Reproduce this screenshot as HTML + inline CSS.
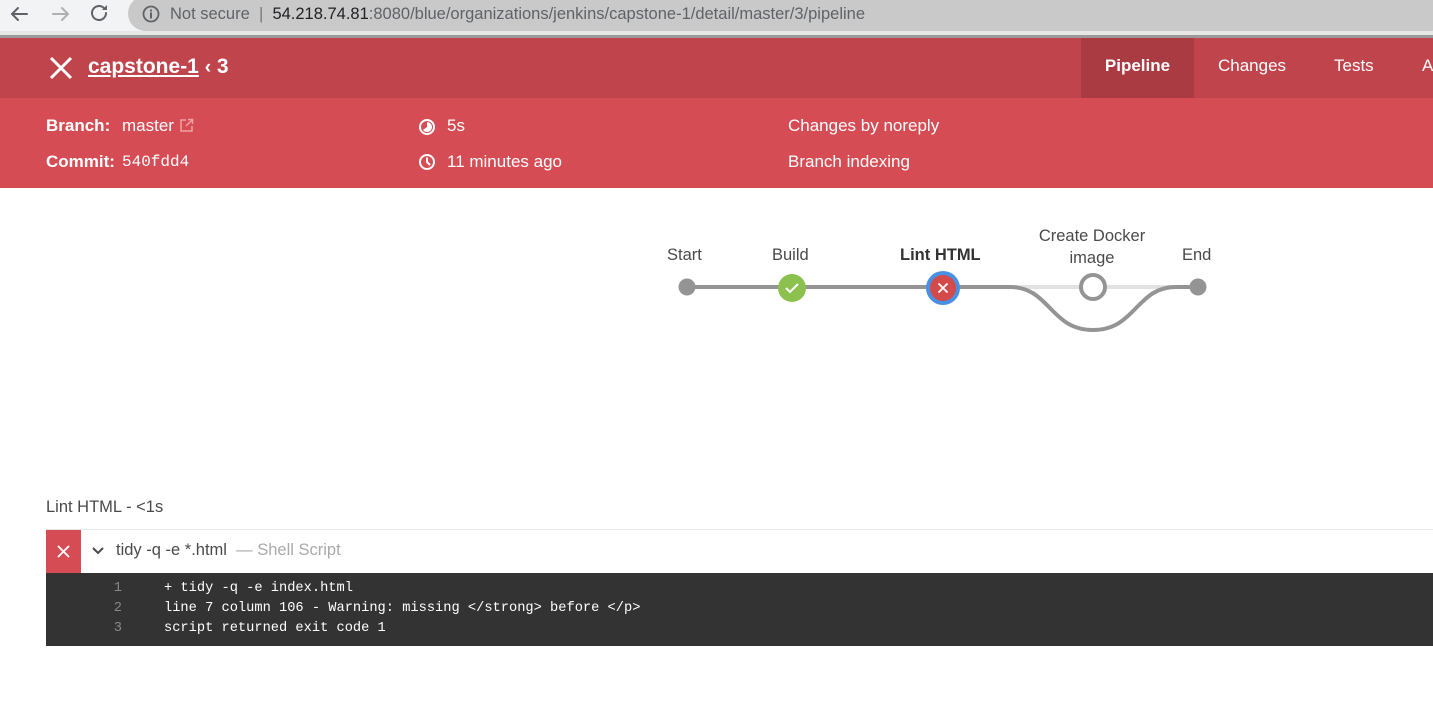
<!DOCTYPE html>
<html><head><meta charset="utf-8"><style>
*{margin:0;padding:0;box-sizing:border-box}
body{width:1433px;height:719px;overflow:hidden;background:#fff;font-family:"Liberation Sans",sans-serif;position:relative}
.abs{position:absolute}
.chrome{left:0;top:0;width:1433px;height:31px;background:#f1f3f4}
.pill{left:128px;top:-4px;width:1320px;height:35px;border-radius:18px;background:#c9c9c9}
.url{left:170px;top:5px;font-size:16.5px;color:#5f6368;white-space:nowrap}
.url b{font-weight:normal;color:#202124}
.hdr{left:0;top:38px;width:1433px;height:60px;background:#c0444c;color:#fff}
.sub{left:0;top:98px;width:1433px;height:90px;background:#d64c54;color:#fff;font-size:17px}
.tab{top:0;height:60px;line-height:56px;font-size:17px;color:#fff}
.lbl{font-weight:bold}
.mono{font-family:"Liberation Mono",monospace}
.node{font-size:16.5px;color:#4a4a4a;text-align:center}
</style></head><body>
<div class="abs chrome"></div>
<div class="abs pill"></div>
<svg class="abs" style="left:0;top:0" width="130" height="31">
<g fill="none" stroke-width="2" stroke-linecap="round">
<path d="M27 14H12M18 8l-6 6 6 6" stroke="#5f6368"/>
<path d="M53 14h15M62 8l6 6-6 6" stroke="#b0b0b0"/>
<path d="M106 13a7 7 0 1 1-2.2-5.1" stroke="#5f6368"/>
</g>
<path d="M107 5v5h-5z" fill="#5f6368"/>
</svg>
<svg class="abs" style="left:142px;top:5px" width="18" height="18"><circle cx="9" cy="9" r="7.5" fill="none" stroke="#5f6368" stroke-width="1.8"/><rect x="8" y="7.5" width="2" height="6" fill="#5f6368"/><rect x="8" y="4.5" width="2" height="2" fill="#5f6368"/></svg>
<div class="abs url">Not secure &nbsp;<span style="color:#777">|</span>&nbsp; <b>54.218.74.81</b>:8080/blue/organizations/jenkins/capstone-1/detail/master/3/pipeline</div>
<div class="abs" style="left:0;top:31px;width:1433px;height:4px;background:#e6e6e6"></div>
<div class="abs" style="left:0;top:35px;width:1433px;height:3px;background:#9a9a9a"></div>

<div class="abs hdr">
<svg class="abs" style="left:49px;top:18px" width="24" height="24"><path d="M2 2L22 22M22 2L2 22" stroke="#fff" stroke-width="3"/></svg>
<div class="abs" style="left:88px;top:17px;font-size:21px;font-weight:bold;white-space:nowrap"><span style="text-decoration:underline">capstone-1</span> <span style="font-size:19px">&lsaquo;</span> 3</div>
<div class="abs tab" style="left:1081px;width:113px;background:#ab3b43;text-align:center;font-weight:bold">Pipeline</div>
<div class="abs tab" style="left:1218px">Changes</div>
<div class="abs tab" style="left:1334px">Tests</div>
<div class="abs tab" style="left:1422px">A</div>
</div>

<div class="abs sub">
<div class="abs lbl" style="left:46px;top:18px">Branch:</div>
<div class="abs" style="left:122px;top:18px">master <svg width="15" height="15" style="vertical-align:-2px"><path d="M7 2H2v11h11V8M9 1.5h4.5V6M13.5 1.5L7 8" fill="none" stroke="#f0a0a4" stroke-width="1.5"/></svg></div>
<div class="abs lbl" style="left:46px;top:54px">Commit:</div>
<div class="abs mono" style="left:122px;top:55px;font-size:16px">540fdd4</div>
<svg class="abs" style="left:418px;top:20px" width="18" height="18"><circle cx="9" cy="9" r="7" fill="none" stroke="#fff" stroke-width="2"/><path d="M9 9V4a5 5 0 1 1-4 8z" fill="#fff"/></svg>
<div class="abs" style="left:447px;top:18px">5s</div>
<svg class="abs" style="left:418px;top:55px" width="18" height="18"><circle cx="9" cy="9" r="7" fill="none" stroke="#fff" stroke-width="2"/><path d="M9 4.5V9l3 3" fill="none" stroke="#fff" stroke-width="2"/></svg>
<div class="abs" style="left:447px;top:54px">11 minutes ago</div>
<div class="abs" style="left:788px;top:18px">Changes by noreply</div>
<div class="abs" style="left:788px;top:54px">Branch indexing</div>
</div>

<div class="abs node" style="left:667px;top:246px">Start</div>
<div class="abs node" style="left:772px;top:246px">Build</div>
<div class="abs node" style="left:900px;top:246px;font-weight:bold;color:#333">Lint HTML</div>
<div class="abs node" style="left:1030px;top:225px;width:124px;line-height:22px">Create Docker<br>image</div>
<div class="abs node" style="left:1182px;top:246px">End</div>
<svg class="abs" style="left:0;top:0" width="1433" height="719">
<path d="M962 287H1200" stroke="#e2e2e2" stroke-width="4" fill="none"/>
<path d="M687 287H1010C1050 287 1050 330 1093 330C1136 330 1136 287 1176 287H1198" stroke="#949494" stroke-width="4" fill="none"/>
<circle cx="687" cy="287" r="8.5" fill="#949494"/>
<circle cx="1198" cy="287" r="8.5" fill="#949494"/>
<circle cx="792" cy="288" r="14" fill="#8cc04f"/>
<path d="M786 288l4 4 8-8" stroke="#fff" stroke-width="2" fill="none"/>
<circle cx="943" cy="288" r="17" fill="#4a90e2"/>
<circle cx="943" cy="288" r="13" fill="#d24a4a"/>
<path d="M938.5 283.5l9 9M947.5 283.5l-9 9" stroke="#fff" stroke-width="1.8"/>
<circle cx="1093" cy="287" r="12" fill="#fff" stroke="#949494" stroke-width="4"/>
</svg>

<div class="abs" style="left:46px;top:498px;font-size:16.5px;color:#4a4a4a">Lint HTML - &lt;1s</div>
<div class="abs" style="left:46px;top:529px;width:1387px;height:1px;background:#e6e6e6"></div>
<div class="abs" style="left:46px;top:530px;width:35px;height:43px;background:#d64c54"></div>
<svg class="abs" style="left:57px;top:545px" width="13" height="13"><path d="M1 1L12 12M12 1L1 12" stroke="#fff" stroke-width="1.8"/></svg>
<svg class="abs" style="left:92px;top:546px" width="12" height="10"><path d="M1 2l5 5 5-5" stroke="#4a4a4a" stroke-width="2" fill="none"/></svg>
<div class="abs" style="left:116px;top:541px;font-size:16.5px;color:#4a4a4a;white-space:nowrap">tidy -q -e *.html &nbsp;<span style="color:#aaa">— Shell Script</span></div>
<div class="abs" style="left:46px;top:573px;width:1387px;height:73px;background:#333"></div>
<div class="abs mono" style="left:100px;top:579px;font-size:13.7px;line-height:20px;color:#888;width:22px;text-align:right">1<br>2<br>3</div>
<div class="abs mono" style="left:164px;top:579px;font-size:13.7px;line-height:20px;color:#fff;white-space:pre">+ tidy -q -e index.html
line 7 column 106 - Warning: missing &lt;/strong&gt; before &lt;/p&gt;
script returned exit code 1</div>
</body></html>
